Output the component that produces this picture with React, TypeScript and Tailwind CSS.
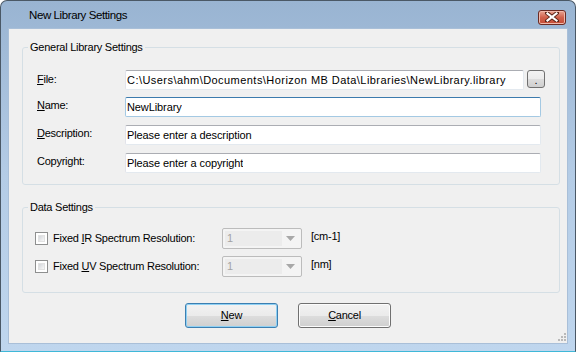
import React from "react"

function Ul({ children }: { children: React.ReactNode }) {
  return <span className="underline underline-offset-[1px] decoration-[1px]">{children}</span>
}

function TextBox({ value, focused, wide }: { value: string; focused?: boolean; wide?: boolean }) {
  return (
    <div
      className={
        "flex-1 h-[20px] flex items-center px-[1px] bg-white rounded-[2px] border " +
        (focused
          ? "border-[#a4c9e3] border-t-[#3d7bad]"
          : "border-[#e3e9ef] border-t-[#abadb3] border-l-[#e2e3ea]")
      }
    >
      <span className={"whitespace-nowrap overflow-hidden " + (wide ? "tracking-[0.45px]" : "tracking-[-0.1px]")}>{value}</span>
    </div>
  )
}

function Combo() {
  return (
    <div className="w-[80px] h-[21px] flex items-center border border-[#bcbcbc] rounded-[2px] bg-[#f4f4f4] p-[2px]">
      <div className="flex-1 h-full bg-[#ececec] flex items-center pl-[2px] text-[#a3a3a3]">1</div>
      <div className="w-[17px] flex justify-center">
        <svg width="9" height="5" viewBox="0 0 9 5">
          <path d="M0 0 H9 L4.5 5 Z" fill="#a8a8a8" />
        </svg>
      </div>
    </div>
  )
}

function CheckRow({ label, unit }: { label: React.ReactNode; unit: string }) {
  return (
    <div className="flex items-center h-[21px]">
      <div className="w-[187px] flex items-center gap-[5px]">
        <div className="w-[13px] h-[13px] border border-[#8e8f8f] bg-white p-[2px]">
          <div className="w-full h-full bg-gradient-to-br from-[#d3d6da] to-[#f8f8f8] border border-[#e2e2e2]" />
        </div>
        <span>{label}</span>
      </div>
      <Combo />
      <span className="ml-[9px] -mt-[4px]">{unit}</span>
    </div>
  )
}

function Btn({ children, primary }: { children: React.ReactNode; primary?: boolean }) {
  return (
    <button
      className={
        "w-[93px] h-[25px] rounded-[3px] border flex items-center justify-center bg-[linear-gradient(#f2f2f2_0%,#ebebeb_50%,#dddddd_51%,#cfcfcf_100%)] " +
        (primary
          ? "border-[#3c7fb1] shadow-[inset_0_0_0_1px_#8fd0f3]"
          : "border-[#707070] shadow-[inset_0_0_0_1px_#fcfcfc]")
      }
    >
      {children}
    </button>
  )
}

export default function App() {
  return (
    <div className="w-[576px] h-[352px] flex flex-col border border-[#4a5866] border-b-[#3fb8d8] rounded-t-[7px] bg-gradient-to-b from-[#99b4d2] via-[#b4cce6] to-[#bfd6ee] font-['Liberation_Sans',Arial,sans-serif] text-[11px] text-black tracking-[-0.25px] overflow-hidden">
      <div className="h-[27px] flex items-center pl-[28px] pr-[9px]">
        <span className="text-[11.5px] tracking-[-0.4px] mt-[2px]">New Library Settings</span>
        <div className="ml-auto mt-[5px] w-[28px] h-[15px] rounded-[3px] border border-[#6b2a22] bg-gradient-to-b from-[#e8a493] via-[#d0614c] to-[#c44b35] flex items-center justify-center shadow-[inset_0_0_0_1px_#f0b8aa]">
          <svg width="14" height="10" viewBox="0 0 14 10">
            <path d="M2 1 L12 9 M12 1 L2 9" stroke="#5a2418" strokeWidth="4" strokeLinecap="square" />
            <path d="M2.5 1.5 L11.5 8.5 M11.5 1.5 L2.5 8.5" stroke="#ffffff" strokeWidth="2.2" strokeLinecap="square" />
          </svg>
        </div>
      </div>

      <div className="relative mx-[7px] mb-[7px] flex-1 bg-[#f0f0f0] border border-[#a9bfd8] flex flex-col">
        <fieldset className="ml-[13px] mr-[7px] mt-[12px] border border-[#d5dfe5] rounded-[3px]">
          <legend className="ml-[5px] px-[2px] leading-[13px]">General Library Settings</legend>
          <div className="pl-[14px] pr-[18px] pt-[16px] pb-[11px]">
            <div className="flex items-start h-[20px] -mr-[4px]">
              <span className="w-[88px] mt-[1px]"><Ul>F</Ul>ile:</span>
              <TextBox value="C:\Users\ahm\Documents\Horizon MB Data\Libraries\NewLibrary.library" wide />
              <div className="ml-[3px] w-[18px] h-[18px] border border-[#707070] rounded-[3px] bg-[linear-gradient(#f2f2f2_0%,#ebebeb_50%,#dddddd_51%,#cfcfcf_100%)] flex items-end justify-center leading-[13px]">.</div>
            </div>
            <div className="flex items-start h-[20px] mt-[7px]">
              <span className="w-[88px]"><Ul>N</Ul>ame:</span>
              <TextBox value="NewLibrary" focused />
            </div>
            <div className="flex items-start h-[20px] mt-[8px]">
              <span className="w-[88px]"><Ul>D</Ul>escription:</span>
              <TextBox value="Please enter a description" />
            </div>
            <div className="flex items-start h-[20px] mt-[8px]">
              <span className="w-[88px]">Copyright:</span>
              <TextBox value="Please enter a copyright" />
            </div>
          </div>
        </fieldset>

        <fieldset className="ml-[13px] mr-[7px] mt-[16px] border border-[#d5dfe5] rounded-[3px]">
          <legend className="ml-[5px] px-[2px] leading-[13px]">Data Settings</legend>
          <div className="pl-[12px] pt-[14px] pb-[15px] flex flex-col gap-[7px]">
            <CheckRow label={<>Fixed <Ul>I</Ul>R Spectrum Resolution:</>} unit="[cm-1]" />
            <CheckRow label={<>Fixed <Ul>U</Ul>V Spectrum Resolution:</>} unit="[nm]" />
          </div>
        </fieldset>

        <div className="mt-[10px] flex justify-center gap-[20px]">
          <Btn primary><Ul>N</Ul>ew</Btn>
          <Btn><Ul>C</Ul>ancel</Btn>
        </div>

        <svg className="absolute right-[1px] bottom-[1px]" width="10" height="10" viewBox="0 0 10 10">
          {[
            [8, 0], [8, 3], [5, 3], [8, 6], [5, 6], [2, 6],
          ].map(([x, y], i) => (
            <rect key={i} x={x} y={y + 1} width="2" height="2" fill="#b9b9b9" />
          ))}
        </svg>
      </div>
    </div>
  )
}
